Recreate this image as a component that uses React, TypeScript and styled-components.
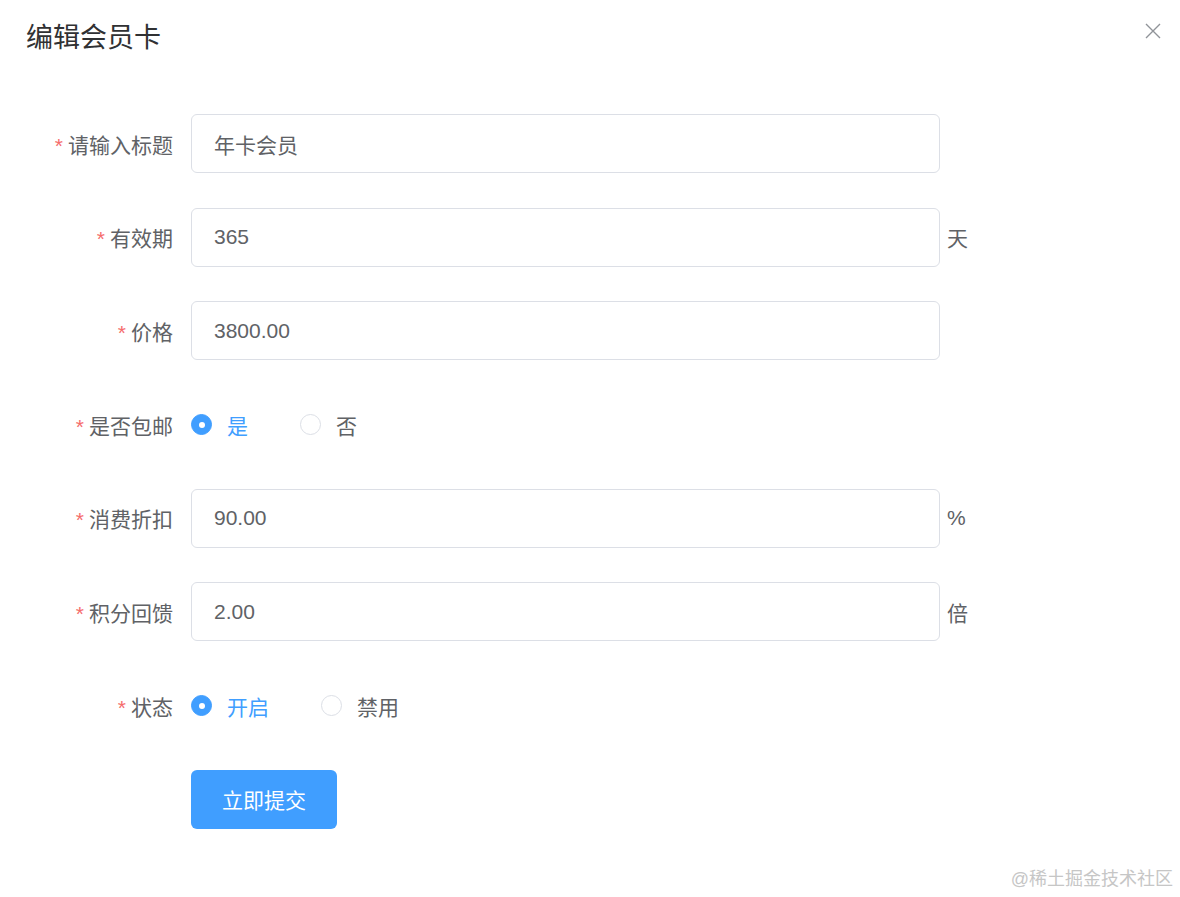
import React, { useState } from 'react';
import styled, { createGlobalStyle } from 'styled-components';

const FONT = `"Liberation Sans", "Noto Sans CJK SC", sans-serif`;

const GlobalStyle = createGlobalStyle`
  html, body {
    margin: 0;
    padding: 0;
    background: #fff;
  }
  body {
    font-family: ${FONT};
  }
  * {
    box-sizing: border-box;
  }
`;

const Page = styled.div`
  position: relative;
  width: 1180px;
  min-height: 897px;
  background: #fff;
`;

const Header = styled.div`
  display: flex;
  justify-content: space-between;
  align-items: flex-start;
  height: 56px;
  padding: 20px 18px 0 26px;
`;

const Title = styled.h2`
  margin: 0;
  font-size: 27px;
  line-height: 36px;
  font-weight: 400;
  color: #303133;
`;

const CloseButton = styled.button`
  margin-top: 2px;
  width: 18px;
  height: 18px;
  padding: 0;
  border: 0;
  background: none;
  cursor: pointer;
  color: #909399;
  display: flex;
  align-items: center;
  justify-content: center;
`;

const Form = styled.form`
  padding: 58px 44px 0;
  display: flex;
  flex-direction: column;
  gap: 34.7px;
`;

const Row = styled.div`
  display: flex;
  align-items: center;
  height: 59px;
`;

const Label = styled.label`
  width: 147px;
  padding-right: 18px;
  text-align: right;
  font-size: 21px;
  color: #606266;
  flex-shrink: 0;
  white-space: nowrap;
`;

const Star = styled.span`
  color: #f56c6c;
  margin-right: 5px;
`;

const Input = styled.input`
  width: 749px;
  height: 59px;
  padding: 0 22px;
  border: 1px solid #dcdfe6;
  border-radius: 6px;
  font-family: ${FONT};
  font-size: 21px;
  color: #606266;
  outline: none;
  &:focus {
    border-color: #409eff;
  }
`;

const Unit = styled.span`
  margin-left: 7px;
  font-size: 21px;
  color: #606266;
`;

const RadioGroup = styled.div`
  display: flex;
  align-items: center;
`;

const RadioItem = styled.label<{ $checked: boolean }>`
  display: flex;
  align-items: center;
  margin-right: 52px;
  cursor: pointer;
  font-size: 21px;
  color: ${({ $checked }) => ($checked ? '#409eff' : '#606266')};
`;

const RadioCircle = styled.span<{ $checked: boolean }>`
  width: 21px;
  height: 21px;
  border-radius: 50%;
  border: 1px solid ${({ $checked }) => ($checked ? '#409eff' : '#dcdfe6')};
  background: ${({ $checked }) => ($checked ? '#409eff' : '#fff')};
  display: flex;
  align-items: center;
  justify-content: center;
  margin-right: 15px;
  &::after {
    content: '';
    width: 6px;
    height: 6px;
    border-radius: 50%;
    background: #fff;
    display: ${({ $checked }) => ($checked ? 'block' : 'none')};
  }
`;

const SubmitRow = styled.div`
  padding-left: 147px;
`;

const SubmitButton = styled.button`
  width: 146px;
  height: 59px;
  border: 0;
  border-radius: 6px;
  background: #409eff;
  color: #fff;
  font-family: ${FONT};
  font-size: 21px;
  cursor: pointer;
`;

const Watermark = styled.div`
  position: absolute;
  right: 7px;
  bottom: 6px;
  font-size: 18px;
  line-height: 24px;
  color: #c6c6c6;
`;

type Option = { value: string; label: string };

const Radio = ({
  options,
  value,
  onChange,
}: {
  options: Option[];
  value: string;
  onChange: (v: string) => void;
}) => (
  <RadioGroup>
    {options.map((o) => (
      <RadioItem key={o.value} $checked={o.value === value} onClick={() => onChange(o.value)}>
        <RadioCircle $checked={o.value === value} />
        {o.label}
      </RadioItem>
    ))}
  </RadioGroup>
);

export default function App() {
  const [title, setTitle] = useState('年卡会员');
  const [days, setDays] = useState('365');
  const [price, setPrice] = useState('3800.00');
  const [shipping, setShipping] = useState('1');
  const [discount, setDiscount] = useState('90.00');
  const [points, setPoints] = useState('2.00');
  const [status, setStatus] = useState('1');

  return (
    <Page>
      <GlobalStyle />
      <Header>
        <Title>编辑会员卡</Title>
        <CloseButton type="button" aria-label="关闭">
          <svg width="16" height="16" viewBox="0 0 16 16">
            <path d="M1 1 L15 15 M15 1 L1 15" stroke="currentColor" strokeWidth="1.4" fill="none" />
          </svg>
        </CloseButton>
      </Header>
      <Form onSubmit={(e) => e.preventDefault()}>
        <Row>
          <Label><Star>*</Star>请输入标题</Label>
          <Input value={title} onChange={(e) => setTitle(e.target.value)} />
        </Row>
        <Row>
          <Label><Star>*</Star>有效期</Label>
          <Input value={days} onChange={(e) => setDays(e.target.value)} />
          <Unit>天</Unit>
        </Row>
        <Row>
          <Label><Star>*</Star>价格</Label>
          <Input value={price} onChange={(e) => setPrice(e.target.value)} />
        </Row>
        <Row>
          <Label><Star>*</Star>是否包邮</Label>
          <Radio
            options={[{ value: '1', label: '是' }, { value: '0', label: '否' }]}
            value={shipping}
            onChange={setShipping}
          />
        </Row>
        <Row>
          <Label><Star>*</Star>消费折扣</Label>
          <Input value={discount} onChange={(e) => setDiscount(e.target.value)} />
          <Unit>%</Unit>
        </Row>
        <Row>
          <Label><Star>*</Star>积分回馈</Label>
          <Input value={points} onChange={(e) => setPoints(e.target.value)} />
          <Unit>倍</Unit>
        </Row>
        <Row>
          <Label><Star>*</Star>状态</Label>
          <Radio
            options={[{ value: '1', label: '开启' }, { value: '0', label: '禁用' }]}
            value={status}
            onChange={setStatus}
          />
        </Row>
        <SubmitRow>
          <SubmitButton type="submit">立即提交</SubmitButton>
        </SubmitRow>
      </Form>
      <Watermark>@稀土掘金技术社区</Watermark>
    </Page>
  );
}
